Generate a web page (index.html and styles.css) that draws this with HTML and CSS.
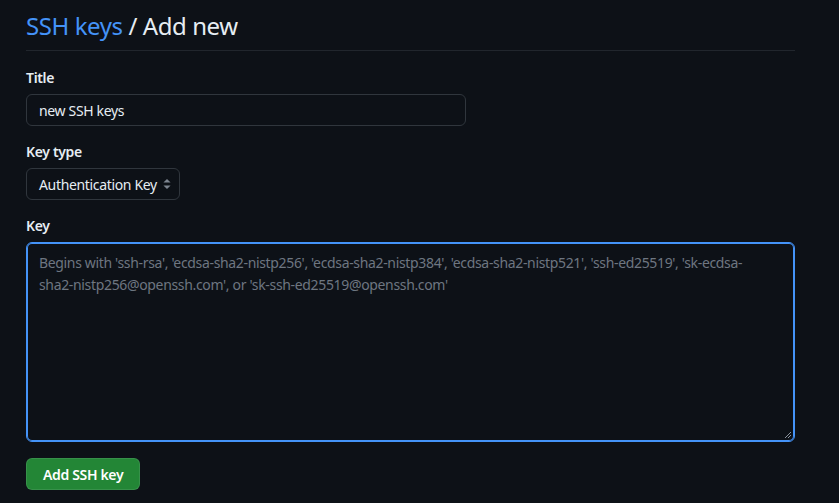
FILE: index.html
```html
<!DOCTYPE html>
<html lang="en">
<head>
<meta charset="utf-8">
<title>SSH keys / Add new</title>
<link rel="stylesheet" href="styles.css">
</head>
<body>
<main class="page">
  <h2 class="subhead"><a class="crumb" href="#">SSH keys</a> / Add new</h2>
  <form class="form">
    <div class="group">
      <label class="label" for="title">Title</label>
      <input class="input title-input" id="title" type="text" value="new SSH keys">
    </div>
    <div class="group">
      <label class="label" for="type">Key type</label>
      <div class="select">
        <span>Authentication Key</span>
        <svg class="caret" width="16" height="16" viewBox="0 0 16 16"><path d="M4.43 6.5 8 3l3.57 3.5zM4.43 9.5h7.14L8 13z" fill="#7d8590"/></svg>
      </div>
    </div>
    <div class="group">
      <label class="label" for="key">Key</label>
      <div class="textarea" id="key">
        <span class="placeholder">Begins with 'ssh-rsa', 'ecdsa-sha2-nistp256', 'ecdsa-sha2-nistp384', 'ecdsa-sha2-nistp521', 'ssh-ed25519', 'sk-ecdsa-sha2-nistp256@openssh.com', or 'sk-ssh-ed25519@openssh.com'</span>
        <svg class="grip" width="8" height="8" viewBox="0 0 8 8"><path d="M7 1 1 7M7 4 4 7" stroke="#8b949e" stroke-width="1"/></svg>
      </div>
    </div>
    <button class="btn" type="button">Add SSH key</button>
  </form>
</main>
</body>
</html>
```
FILE: styles.css
```css
* { box-sizing: border-box; }
html, body {
  margin: 0;
  background: #0d1117;
  color: #e6edf3;
  font-family: "Noto Sans", "Open Sans", sans-serif;
  font-size: 14px;
  letter-spacing: -0.34px;
}
.page {
  width: 769px;
  margin-left: 26px;
  padding-top: 10px;
}
.subhead {
  margin: 0;
  font-size: 24px;
  font-weight: 400;
  line-height: 32px;
  letter-spacing: -0.42px;
  padding-bottom: 8px;
  border-bottom: 1px solid #21262d;
  color: #e6edf3;
}
.crumb {
  color: #4493f8;
  text-decoration: none;
}
.form {
  display: flex;
  flex-direction: column;
  align-items: flex-start;
  padding-top: 17px;
  gap: 16px;
}
.group {
  display: flex;
  flex-direction: column;
  align-items: flex-start;
  gap: 6px;
  width: 100%;
}
.label {
  font-weight: 600;
  font-size: 14px;
  line-height: 20px;
}
.input {
  width: 440px;
  height: 32px;
  background: #0d1117;
  border: 1px solid #30363d;
  border-radius: 6px;
  color: #e6edf3;
  font: inherit;
  letter-spacing: inherit;
  padding: 0 12px;
  outline: none;
}
.select {
  display: flex;
  align-items: center;
  gap: 2px;
  height: 32px;
  padding: 0 4px 0 12px;
  border: 1px solid #30363d;
  border-radius: 6px;
  color: #e6edf3;
}
.caret { flex: none; }
.textarea {
  position: relative;
  width: 769px;
  height: 200px;
  border: 1px solid #4493f8;
  box-shadow: inset 0 0 0 1px #4493f8;
  border-radius: 6px;
  padding: 9px 36px 9px 12px;
  line-height: 22px;
}
.placeholder { color: #6e7681; }
.grip {
  position: absolute;
  right: 2px;
  bottom: 2px;
}
.btn {
  height: 32px;
  padding: 0 16px;
  background: #238636;
  color: #ffffff;
  border: 1px solid rgba(240, 246, 252, 0.1);
  border-radius: 6px;
  font: inherit;
  letter-spacing: inherit;
  font-weight: 600;
}
```
